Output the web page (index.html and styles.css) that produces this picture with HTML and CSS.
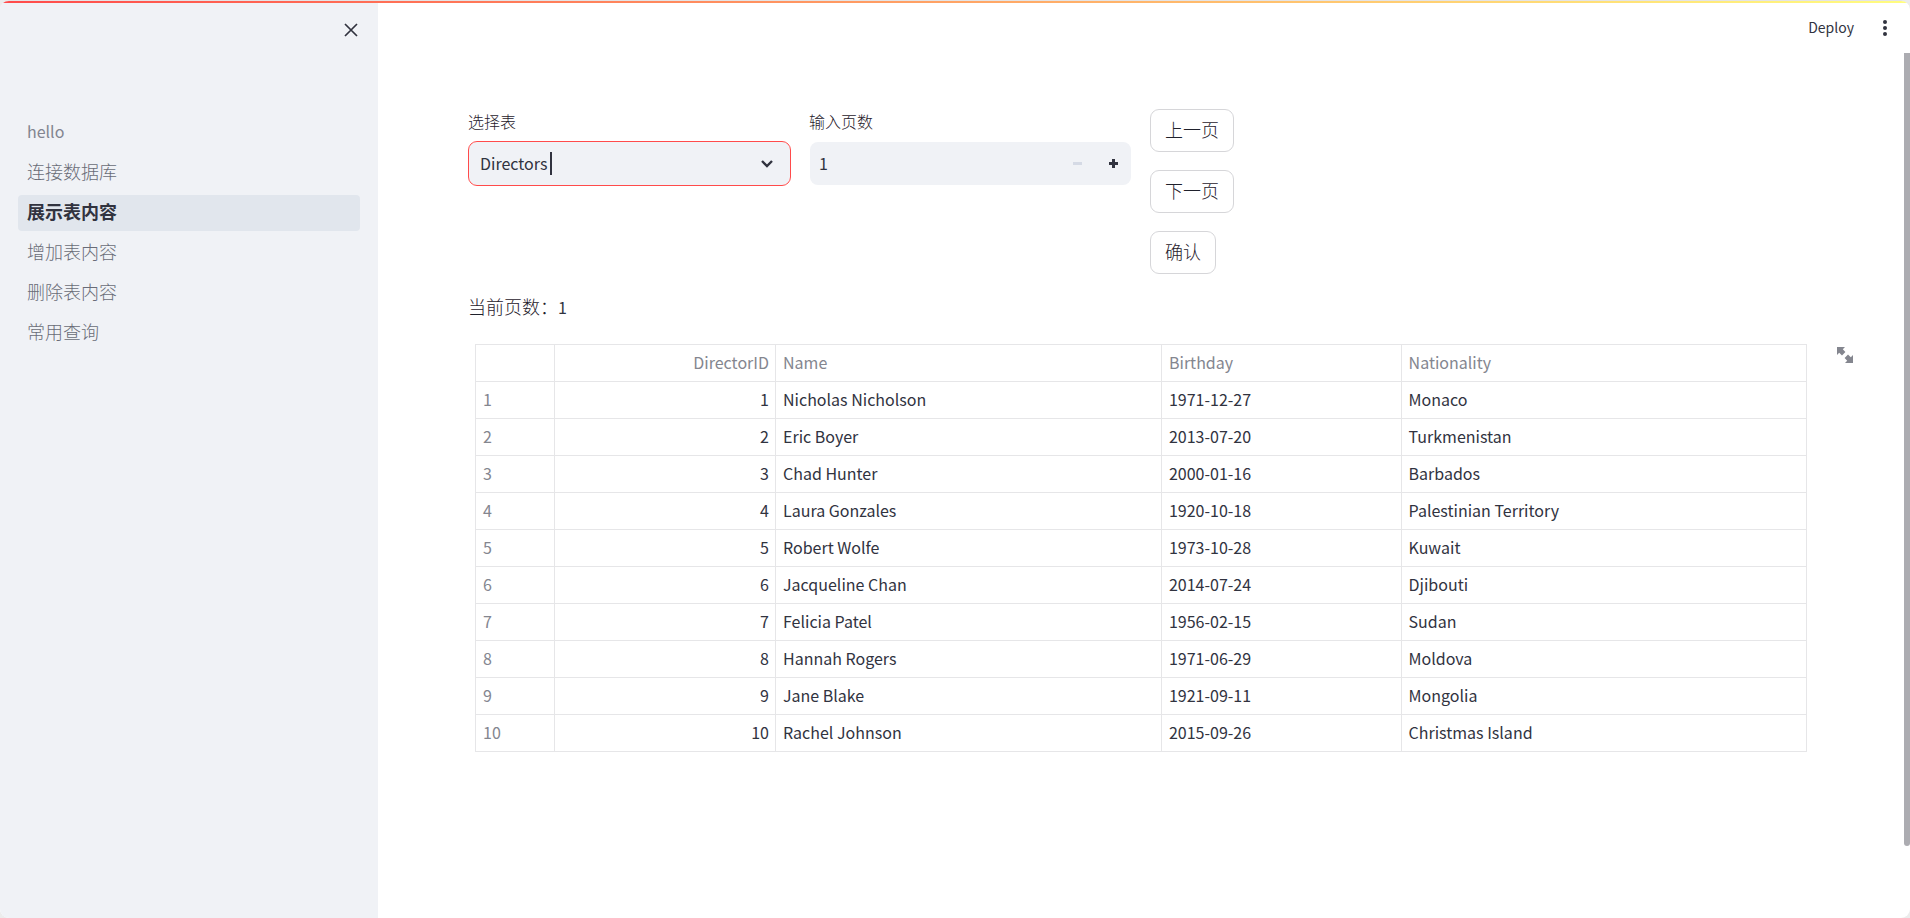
FILE: index.html
```html
<!DOCTYPE html>
<html lang="zh-CN">
<head>
<meta charset="utf-8">
<meta name="viewport" content="width=device-width, initial-scale=1">
<title>展示表内容</title>
<link rel="stylesheet" href="styles.css">
</head>
<body>
<div class="app">
  <div class="decoration"></div>
  <aside class="sidebar">
    <div class="sidebar-head">
      <button class="icon-button" type="button" aria-label="Close sidebar">
        <svg width="14" height="14" viewBox="0 0 14 14" fill="none" stroke="currentColor" stroke-width="1.7"><path d="M1 1 13 13M13 1 1 13"/></svg>
      </button>
    </div>
    <nav class="nav">
      <a class="nav-link latin" href="#">hello</a>
      <a class="nav-link" href="#">连接数据库</a>
      <a class="nav-link active" href="#" aria-current="page">展示表内容</a>
      <a class="nav-link" href="#">增加表内容</a>
      <a class="nav-link" href="#">删除表内容</a>
      <a class="nav-link" href="#">常用查询</a>
    </nav>
  </aside>
  <div class="view">
    <header class="toolbar">
      <button class="deploy" type="button">Deploy</button>
      <button class="icon-button" type="button" aria-label="Menu">
        <svg width="6" height="18" viewBox="0 0 6 18" fill="currentColor"><circle cx="3" cy="3" r="2"/><circle cx="3" cy="9" r="2"/><circle cx="3" cy="15" r="2"/></svg>
      </button>
    </header>
    <main class="content">
      <div class="columns">
        <div class="field">
          <label for="table-select">选择表</label>
          <div class="control select-control">
            <select id="table-select"><option>Directors</option></select>
            <span class="caret"></span>
            <svg class="chevron" width="12" height="8" viewBox="0 0 12 8" fill="none" stroke="currentColor" stroke-width="2.4"><path d="M1 1 6 6 11 1"/></svg>
          </div>
        </div>
        <div class="field">
          <label for="page-input">输入页数</label>
          <div class="control number-control">
            <input id="page-input" type="text" inputmode="numeric" value="1">
            <button class="step" type="button" aria-label="Decrease" disabled>
              <svg width="9" height="9" viewBox="0 0 9 9" fill="currentColor"><path d="M0 3h9v3H0z"/></svg>
            </button>
            <button class="step" type="button" aria-label="Increase">
              <svg width="9" height="9" viewBox="0 0 9 9" fill="currentColor"><path d="M3 0h3v3h3v3H6v3H3V6H0V3h3z"/></svg>
            </button>
          </div>
        </div>
        <div class="actions">
          <button class="button" type="button">上一页</button>
          <button class="button" type="button">下一页</button>
          <button class="button" type="button">确认</button>
        </div>
      </div>
      <p class="status">当前页数：<span class="latin">1</span></p>
      <div class="table-wrap">
        <table class="data">
          <colgroup><col class="c-index"><col class="c-id"><col class="c-name"><col class="c-birthday"><col class="c-nation"></colgroup>
          <thead>
            <tr><th></th><th class="num">DirectorID</th><th>Name</th><th>Birthday</th><th>Nationality</th></tr>
          </thead>
          <tbody>
            <tr><th>1</th><td class="num">1</td><td>Nicholas Nicholson</td><td>1971-12-27</td><td>Monaco</td></tr>
            <tr><th>2</th><td class="num">2</td><td>Eric Boyer</td><td>2013-07-20</td><td>Turkmenistan</td></tr>
            <tr><th>3</th><td class="num">3</td><td>Chad Hunter</td><td>2000-01-16</td><td>Barbados</td></tr>
            <tr><th>4</th><td class="num">4</td><td>Laura Gonzales</td><td>1920-10-18</td><td>Palestinian Territory</td></tr>
            <tr><th>5</th><td class="num">5</td><td>Robert Wolfe</td><td>1973-10-28</td><td>Kuwait</td></tr>
            <tr><th>6</th><td class="num">6</td><td>Jacqueline Chan</td><td>2014-07-24</td><td>Djibouti</td></tr>
            <tr><th>7</th><td class="num">7</td><td>Felicia Patel</td><td>1956-02-15</td><td>Sudan</td></tr>
            <tr><th>8</th><td class="num">8</td><td>Hannah Rogers</td><td>1971-06-29</td><td>Moldova</td></tr>
            <tr><th>9</th><td class="num">9</td><td>Jane Blake</td><td>1921-09-11</td><td>Mongolia</td></tr>
            <tr><th>10</th><td class="num">10</td><td>Rachel Johnson</td><td>2015-09-26</td><td>Christmas Island</td></tr>
          </tbody>
        </table>
        <button class="expand" type="button" aria-label="View fullscreen">
          <svg width="18" height="18" viewBox="0 0 18 18" fill="currentColor"><path d="M1 1h8L6.800 3.200 9.400 6 6 9.400 3.200 6.800 1 9z"/><path d="M17 17H9l2.200-2.200L8.600 12 12 8.600l2.800 2.600L17 9z"/></svg>
        </button>
      </div>
    </main>
    <div class="scroll-thumb"></div>
  </div>
</div>
</body>
</html>
```

FILE: styles.css
```css
* {
  box-sizing: border-box;
}

body {
  margin: 0;
  background: #ececec;
  color: #31333f;
  font-family: "Noto Sans CJK SC", "Noto Sans", sans-serif;
  font-size: 18px;
  line-height: 28px;
}

button,
input,
select {
  margin: 0;
  padding: 0;
  border: 0;
  background: none;
  color: inherit;
  font: inherit;
}

svg {
  display: block;
}

.app {
  position: relative;
  display: flex;
  min-height: 100vh;
  border-top: 1px solid #e4e4e6;
  border-radius: 9px;
  background: #fff;
  overflow: hidden;
}

.decoration {
  position: absolute;
  inset: 0 0 auto;
  height: 2px;
  background: linear-gradient(90deg, #ff4b4b, #fffd80);
}

.latin {
  font-size: 16px;
}

.sidebar {
  flex: 0 0 378px;
  padding: 0 18px;
  background: #f0f2f6;
}

.sidebar-head {
  display: flex;
  justify-content: flex-end;
  height: 114px;
  padding: 22px 2px 0;
}

.icon-button {
  align-self: flex-start;
}

.nav {
  display: flex;
  flex-direction: column;
  gap: 4px;
}

.nav-link {
  height: 36px;
  padding: 0 9px;
  border-radius: 4px;
  color: #696c77;
  font-weight: 300;
  line-height: 33px;
  text-decoration: none;
}

.nav-link.latin {
  color: #828590;
  font-weight: 400;
}

.nav-link.active {
  background: #e1e6ed;
  color: #31333f;
  font-weight: 700;
}

.view {
  position: relative;
  flex: 1;
  min-width: 0;
}

.toolbar {
  display: flex;
  justify-content: flex-end;
  align-items: center;
  gap: 28px;
  height: 52px;
  padding: 2px 22px 0 0;
}

.toolbar .icon-button {
  align-self: center;
}

.deploy {
  padding-bottom: 2px;
  font-size: 14px;
}

.content {
  padding: 56px 96px 80px 90px;
}

.columns {
  display: grid;
  grid-template-columns: repeat(4, minmax(0, 1fr));
  gap: 18px;
}

.field label {
  display: block;
  height: 32px;
  color: #1f212c;
  font-size: 16px;
  font-weight: 300;
  line-height: 25px;
}

.control {
  position: relative;
  display: flex;
  align-items: center;
  height: 45px;
  border: 1px solid transparent;
  border-radius: 9px;
  background: #f0f2f6;
  background-clip: padding-box;
  font-size: 16px;
}

.select-control {
  border-color: #ff4b4b;
}

.select-control select {
  width: 100%;
  height: 43px;
  padding: 0 11px 2px;
  appearance: none;
  outline: 0;
}

.caret {
  position: absolute;
  left: 81px;
  width: 2px;
  height: 23px;
  background: #31333f;
}

.chevron {
  position: absolute;
  right: 17px;
  pointer-events: none;
}

.number-control input {
  flex: 1;
  min-width: 0;
  height: 43px;
  padding: 0 9px 2px;
  outline: 0;
}

.step {
  display: grid;
  flex: 0 0 36px;
  height: 43px;
  place-items: center;
}

.step:disabled {
  color: #d5dae5;
}

.actions {
  display: flex;
  flex-direction: column;
  align-items: flex-start;
  gap: 18px;
}

.button {
  height: 43px;
  padding: 0 14px 4px;
  border: 1px solid #d6d6d9;
  border-radius: 9px;
  background: #fff;
  color: #1f212c;
  font-weight: 300;
}

.status {
  margin: 18px 0 23px;
  color: #1f212c;
  font-weight: 300;
}

.status .latin {
  color: #31333f;
  font-weight: 400;
}

.table-wrap {
  position: relative;
  padding: 0 7px;
}

.data {
  width: 100%;
  border-collapse: collapse;
  table-layout: fixed;
  font-size: 16px;
  line-height: 34px;
}

.c-index { width: 79px; }
.c-id { width: 221px; }
.c-name { width: 29%; }
.c-birthday { width: 18%; }

.data th,
.data td {
  height: 37px;
  padding: 0 7px 2px;
  border: 1px solid #e6e6e8;
  text-align: left;
}

.data th {
  color: #84868f;
  font-weight: 400;
}

.data .num {
  padding-right: 6px;
  text-align: right;
}

.expand {
  position: absolute;
  top: 2px;
  right: -40px;
  color: #84868f;
}

.scroll-thumb {
  position: absolute;
  top: 52px;
  right: 0;
  bottom: 72px;
  width: 6px;
  border-radius: 0 0 3px 3px;
  background: #acacb1;
}
```
